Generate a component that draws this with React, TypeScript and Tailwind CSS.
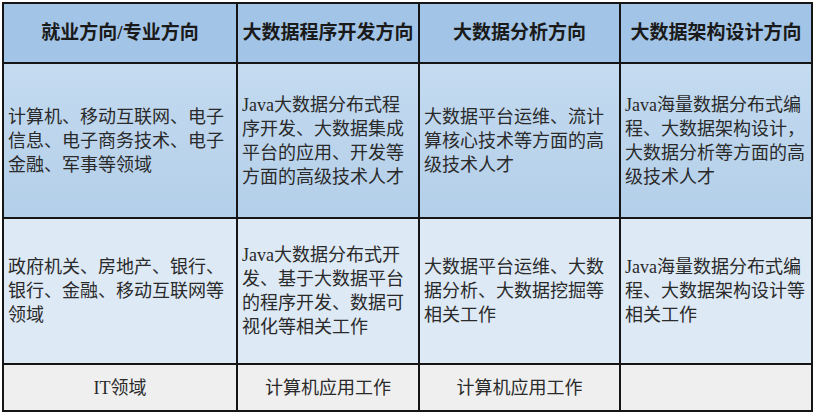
const headers = ['就业方向/专业方向', '大数据程序开发方向', '大数据分析方向', '大数据架构设计方向'];

// each cell is a list of lines, kept as in the picture
const rows: { bg: string; center?: boolean; cells: string[][] }[] = [
  {
    bg: 'bg-gradient-to-b from-[#c4dbf0] to-[#b4cfe9]',
    cells: [
      ['计算机、移动互联网、电子', '信息、电子商务技术、电子', '金融、军事等领域'],
      ['Java大数据分布式程', '序开发、大数据集成', '平台的应用、开发等', '方面的高级技术人才'],
      ['大数据平台运维、流计', '算核心技术等方面的高', '级技术人才'],
      ['Java海量数据分布式编', '程、大数据架构设计，', '大数据分析等方面的高', '级技术人才'],
    ],
  },
  {
    bg: 'bg-[#dde9f5]',
    cells: [
      ['政府机关、房地产、银行、', '银行、金融、移动互联网等', '领域'],
      ['Java大数据分布式开', '发、基于大数据平台', '的程序开发、数据可', '视化等相关工作'],
      ['大数据平台运维、大数', '据分析、大数据挖掘等', '相关工作'],
      ['Java海量数据分布式编', '程、大数据架构设计等', '相关工作'],
    ],
  },
  {
    bg: 'bg-[#efefef]',
    center: true,
    cells: [['IT领域'], ['计算机应用工作'], ['计算机应用工作'], []],
  },
];

const font = { fontFamily: '"Liberation Serif", "Noto Sans CJK SC", serif' };

export default function App() {
  return (
    <div className="w-[816px] h-[419px] bg-white pt-[2px] pl-[2px]" style={font}>
      <div className="grid grid-cols-[232px_180px_199px_190px] grid-rows-[58px_153px_144px_45px] gap-[2px] p-[2px] bg-[#151515] w-fit">
        {headers.map((h) => (
          <div key={h} className="bg-[#a2c4e6] flex items-center justify-center text-[19px] font-bold text-[#1a1a1a]">
            {h}
          </div>
        ))}
        {rows.map((row, ri) =>
          row.cells.map((lines, ci) => (
            <div
              key={`${ri}-${ci}`}
              className={`${row.bg} flex flex-col justify-center text-[18px] leading-[24px] text-[#2a2a2a] ${
                row.center ? 'items-center' : 'items-start pl-[4px]'
              }`}
            >
              {lines.map((l, i) => (
                <div key={i} className="whitespace-nowrap">
                  {l}
                </div>
              ))}
            </div>
          ))
        )}
      </div>
    </div>
  );
}
